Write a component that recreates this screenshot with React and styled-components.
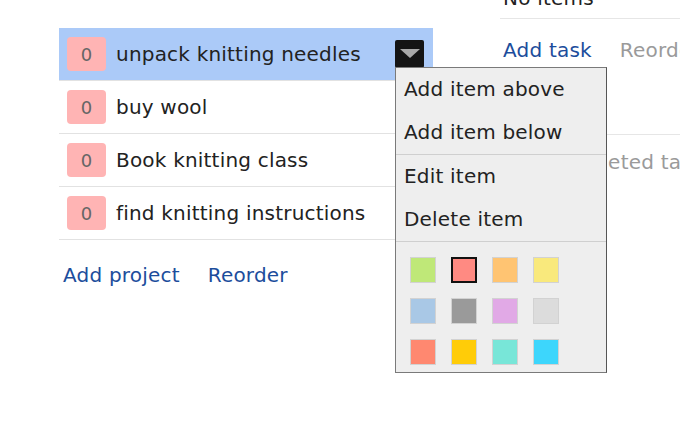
import React from 'react';
import styled, { createGlobalStyle } from 'styled-components';

const GlobalStyle = createGlobalStyle`
  html, body {
    margin: 0;
    padding: 0;
    background: #fff;
    overflow: hidden;
  }
  body {
    font-family: 'DejaVu Sans', Verdana, sans-serif;
    font-size: 20px;
    letter-spacing: 0.2px;
    color: #222;
  }
`;

const Page = styled.div`
  display: flex;
  align-items: flex-start;
  padding-left: 59px;
  width: 680px;
  height: 428px;
  box-sizing: border-box;
`;

const ProjectColumn = styled.div`
  width: 374px;
  flex-shrink: 0;
  margin-top: 28px;
`;

const ProjectList = styled.ul`
  list-style: none;
  margin: 0;
  padding: 0;
`;

const ProjectRow = styled.li`
  position: relative;
  display: flex;
  align-items: center;
  height: 52px;
  padding: 0 9px 0 8px;
  border-bottom: 1px solid #e2e2e2;
  background: ${p => (p.selected ? '#abcaf8' : 'transparent')};
`;

const Badge = styled.span`
  display: flex;
  align-items: center;
  justify-content: center;
  width: 39px;
  height: 34px;
  border-radius: 4px;
  background: #ffb4b4;
  color: #666;
  font-size: 18px;
  flex-shrink: 0;
`;

const ProjectName = styled.span`
  flex: 1;
  margin-left: 10px;
  line-height: 24px;
  white-space: nowrap;
`;

const MenuButton = styled.button`
  display: flex;
  align-items: center;
  justify-content: center;
  width: 29px;
  height: 28px;
  padding: 0;
  border: none;
  border-radius: 2px;
  background: #141414;
  flex-shrink: 0;
`;

const Links = styled.div`
  display: flex;
  gap: 28px;
  padding-left: ${p => p.indent || 0}px;
  margin-top: ${p => p.top || 0}px;
  line-height: 24px;
`;

const Link = styled.a`
  color: ${p => (p.muted ? '#9a9a9a' : '#1c4d9c')};
  text-decoration: none;
  white-space: nowrap;
`;

const TaskColumn = styled.div`
  flex: 1;
  min-width: 0;
  margin-left: 67px;
  margin-top: -14px;
  overflow: hidden;
`;

const EmptyNote = styled.div`
  line-height: 24px;
  padding: 0 0 8px 3px;
  border-bottom: 1px solid #e6e6e6;
  color: #222;
`;

const Divider = styled.div`
  height: 1px;
  background: #e6e6e6;
  margin-top: 72px;
`;

const Completed = styled.div`
  margin-top: 15px;
  padding-left: 12px;
  line-height: 24px;
  color: #9a9a9a;
  white-space: nowrap;
`;

const Menu = styled.div`
  position: absolute;
  top: 39px;
  left: 336px;
  width: 212px;
  box-sizing: border-box;
  background: #eeeeee;
  border: 1px solid #7a7a7a;
  border-right-color: #555;
  z-index: 10;
  padding-bottom: 7px;
`;

const MenuItem = styled.div`
  padding: 9px 8px 10px;
  line-height: 24px;
  color: #222;
  white-space: nowrap;
`;

const MenuSeparator = styled.div`
  height: 1px;
  background: #cfcfcf;
`;

const SwatchGrid = styled.div`
  display: grid;
  grid-template-columns: repeat(4, 26px);
  gap: 15px;
  padding: 15px 0 0 14px;
`;

const Swatch = styled.span`
  width: 26px;
  height: 26px;
  box-sizing: border-box;
  background: ${p => p.color};
  border: ${p => (p.selected ? '2px solid #111' : '1px solid #d2d2d2')};
`;

const swatches = [
  '#bfe878', '#ff8a82', '#ffc472', '#f9e97c',
  '#a9c8e6', '#9a9a9a', '#e1a9e6', '#dcdcdc',
  '#ff8870', '#ffcc08', '#78e6d8', '#3dd6fc',
];

const projects = [
  'unpack knitting needles',
  'buy wool',
  'Book knitting class',
  'find knitting instructions',
];

function ItemMenu() {
  return (
    <Menu>
      <MenuItem>Add item above</MenuItem>
      <MenuItem>Add item below</MenuItem>
      <MenuSeparator />
      <MenuItem>Edit item</MenuItem>
      <MenuItem>Delete item</MenuItem>
      <MenuSeparator />
      <SwatchGrid>
        {swatches.map((c, i) => (
          <Swatch key={i} color={c} selected={i === 1} />
        ))}
      </SwatchGrid>
    </Menu>
  );
}

export default function App() {
  return (
    <>
      <GlobalStyle />
      <Page>
        <ProjectColumn>
          <ProjectList>
            {projects.map((name, i) => (
              <ProjectRow key={name} selected={i === 0}>
                <Badge>0</Badge>
                <ProjectName>{name}</ProjectName>
                {i === 0 && (
                  <>
                    <MenuButton aria-label="menu">
                      <svg width="20" height="10" viewBox="0 0 20 10">
                        <path d="M0 0h20L10 9z" fill="#a8a8a8" />
                      </svg>
                    </MenuButton>
                    <ItemMenu />
                  </>
                )}
              </ProjectRow>
            ))}
          </ProjectList>
          <Links indent={4} top={23}>
            <Link href="#">Add project</Link>
            <Link href="#">Reorder</Link>
          </Links>
        </ProjectColumn>
        <TaskColumn>
          <EmptyNote>No items</EmptyNote>
          <Links indent={3} top={19}>
            <Link href="#">Add task</Link>
            <Link href="#" muted>Reorder</Link>
          </Links>
          <Divider />
          <Completed>No completed tasks</Completed>
        </TaskColumn>
      </Page>
    </>
  );
}
